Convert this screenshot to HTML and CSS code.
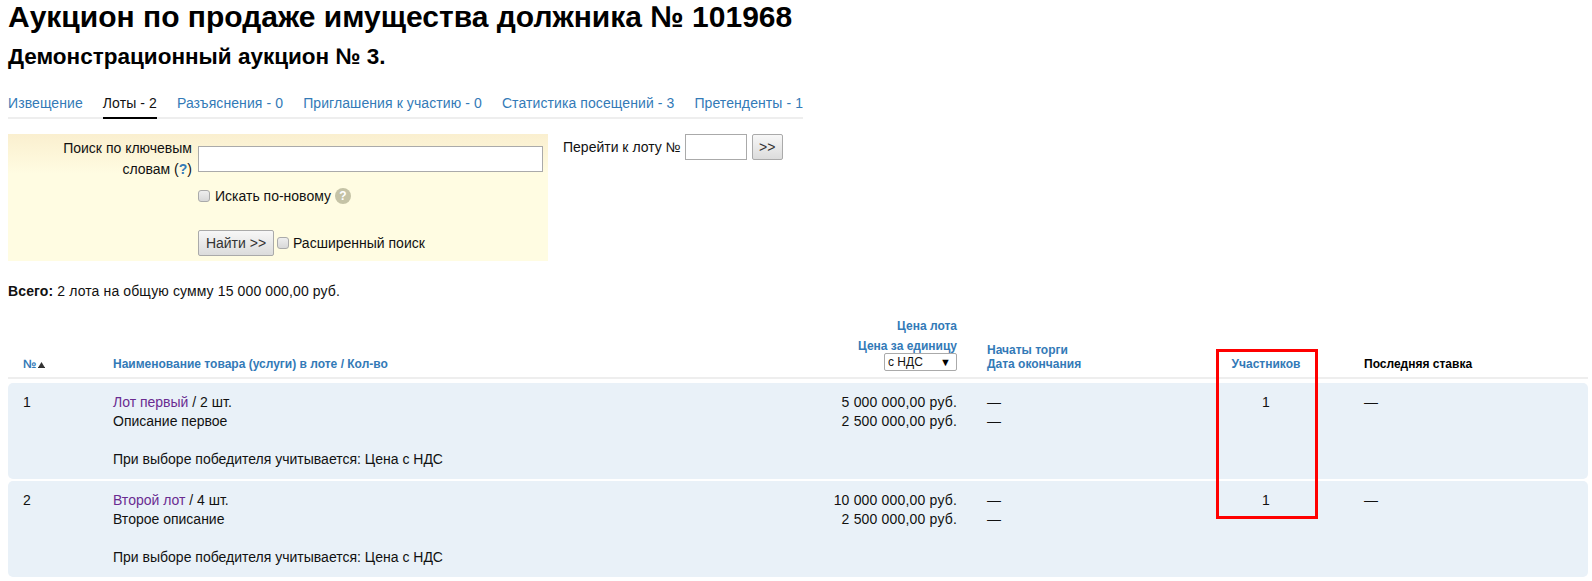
FILE: index.html
```html
<!DOCTYPE html>
<html lang="ru">
<head>
    <meta charset="UTF-8">
    <title>Аукцион № 101968</title>
    <link rel="stylesheet" href="styles.css">
</head>
<body>
<h1>Аукцион по продаже имущества должника № 101968</h1>
<h2>Демонстрационный аукцион № 3.</h2>

<ul class="tabs">
    <li><a href="#">Извещение</a></li>
    <li class="active"><a href="#">Лоты - 2</a></li>
    <li><a href="#">Разъяснения - 0</a></li>
    <li><a href="#">Приглашения к участию - 0</a></li>
    <li><a href="#">Статистика посещений - 3</a></li>
    <li><a href="#">Претенденты - 1</a></li>
</ul>

<div class="filters">
    <form class="search-box">
        <label class="search-label" for="keywords">Поиск по ключевым<br>словам (<a href="#" class="hint">?</a>)</label>
        <div class="search-fields">
            <input id="keywords" class="search-input" type="text">
            <label class="check new-search"><input type="checkbox"> Искать по-новому <span class="help">?</span></label>
            <div class="search-actions">
                <button type="button" class="btn">Найти &gt;&gt;</button>
                <label class="check"><input type="checkbox"> Расширенный поиск</label>
            </div>
        </div>
    </form>
    <div class="goto">
        <label for="lot-number">Перейти к лоту №</label>
        <input id="lot-number" class="goto-input" type="text">
        <button type="button" class="btn btn-small">&gt;&gt;</button>
    </div>
</div>

<p class="total"><b>Всего:</b> 2 лота на общую сумму 15 000 000,00 руб.</p>

<div class="lots">
    <div class="row head">
        <div>
            <a href="#">№</a>
            <svg class="sort" width="7" height="6" viewBox="0 0 7 6"><path d="M3.5 0L6.5 5H0.5Z" fill="#333"/><path d="M0 5.5H7" stroke="#333"/></svg>
        </div>
        <div><a href="#">Наименование товара (услуги) в лоте / Кол-во</a></div>
        <div class="price">
            <a href="#" class="price-lot">Цена лота</a>
            <a href="#">Цена за единицу</a>
            <div class="select-wrap">
                <select><option>с НДС</option><option>без НДС</option></select>
                <span class="select-arrow">▼</span>
            </div>
        </div>
        <div class="date"><a href="#">Начаты торги</a><br><a href="#">Дата окончания</a></div>
        <div class="center"><a href="#">Участников</a></div>
        <div class="last">Последняя ставка</div>
    </div>

    <div class="row lot">
        <div>1</div>
        <div>
            <a href="#" class="visited">Лот первый</a> / 2 шт.<br>
            Описание первое<br><br>
            При выборе победителя учитывается: Цена с НДС
        </div>
        <div class="price">5 000 000,00 руб.<br>2 500 000,00 руб.</div>
        <div class="date">—<br>—</div>
        <div class="center">1</div>
        <div class="last">—</div>
    </div>

    <div class="row lot">
        <div>2</div>
        <div>
            <a href="#" class="visited">Второй лот</a> / 4 шт.<br>
            Второе описание<br><br>
            При выборе победителя учитывается: Цена с НДС
        </div>
        <div class="price">10 000 000,00 руб.<br>2 500 000,00 руб.</div>
        <div class="date">—<br>—</div>
        <div class="center">1</div>
        <div class="last">—</div>
    </div>

    <div class="highlight"></div>
</div>
</body>
</html>
```

FILE: styles.css
```css
body {
    margin: 0;
    padding: 0 4px 0 8px;
    font-family: "Liberation Sans", Arial, sans-serif;
    font-size: 14px;
    line-height: 19px;
    color: #111;
}
a {
    color: #337ab7;
    text-decoration: none;
}
h1 {
    margin: 0;
    color: #000;
    font-size: 30px;
    line-height: 34px;
}
h2 {
    margin: 11px 0 0;
    color: #000;
    font-size: 22.5px;
    line-height: 24px;
}

.tabs {
    display: flex;
    gap: 20px;
    width: 795px;
    margin: 21px 0 0;
    padding: 0;
    list-style: none;
    border-bottom: 2px solid #eee;
    letter-spacing: .09px;
}
.tabs li {
    margin-bottom: -2px;
    padding: 4px 0 4px;
    border-bottom: 2px solid transparent;
    white-space: nowrap;
}
.tabs .active {
    border-bottom-color: #000;
}
.tabs .active a {
    color: #111;
}

.filters {
    display: flex;
    align-items: flex-start;
    margin-top: 15px;
}
.search-box {
    display: flex;
    width: 540px;
    height: 127px;
    box-sizing: border-box;
    padding: 0 5px 0 0;
    background: linear-gradient(#faefcf, #fffce2 40px);
}
.search-label {
    width: 184px;
    padding-top: 4px;
    line-height: 21px;
    text-align: right;
}
.hint {
    font-weight: bold;
}
.search-fields {
    flex: 1;
    margin-left: 6px;
    padding-top: 12px;
}
.search-input {
    display: block;
    width: 100%;
    height: 26px;
    box-sizing: border-box;
    margin: 0;
    border: 1px solid #aaa;
    background: #fff;
}
.check {
    display: flex;
    align-items: center;
    gap: 3px;
}
.check input {
    width: 12px;
    height: 12px;
    margin: 0 2px 0 0;
    border: 1px solid #aaa;
    border-radius: 3px;
    background: linear-gradient(#eee, #d8d8d8);
    appearance: none;
}
.new-search {
    height: 20px;
    margin-top: 14px;
}
.help {
    width: 16px;
    height: 16px;
    margin-left: 1px;
    border-radius: 50%;
    background: #c5c3a6;
    color: #fff;
    font-size: 12px;
    font-weight: bold;
    line-height: 16px;
    text-align: center;
}
.search-actions {
    display: flex;
    align-items: center;
    gap: 3px;
    margin-top: 24px;
}
.search-actions .check {
    gap: 2px;
}
.btn {
    width: 76px;
    height: 26px;
    padding: 0;
    border: 1px solid #aaa;
    border-radius: 2px;
    background: linear-gradient(#f7f7f7, #dcdcdc);
    color: #333;
    font-family: inherit;
    font-size: 14px;
}
.btn-small {
    width: 31px;
    margin-left: 2px;
}

.goto {
    display: flex;
    align-items: flex-start;
    gap: 3px;
    margin-left: 15px;
}
.goto label {
    margin-top: 4px;
    margin-right: 1px;
}
.goto-input {
    width: 62px;
    height: 26px;
    box-sizing: border-box;
    margin: 0;
    border: 1px solid #aaa;
    background: #fff;
}

.total {
    margin: 21px 0 0;
    letter-spacing: .12px;
}

.lots {
    position: relative;
    margin-top: 18px;
}
.row {
    display: grid;
    grid-template-columns: 90px 574px 270px 260px 98px 1fr;
    padding-left: 15px;
}
.head {
    align-items: end;
    padding-bottom: 6px;
    border-bottom: 2px solid #eee;
    color: #000;
    font-size: 12px;
    font-weight: bold;
    line-height: 14px;
}
.lot {
    height: 96px;
    box-sizing: border-box;
    margin-top: 2px;
    padding-top: 10px;
    border-radius: 5px;
    background: #e9f1f8;
}
.lot .price {
    letter-spacing: .18px;
}
.head + .lot {
    margin-top: 4px;
}
.visited {
    color: #6a2c91;
}
.price {
    text-align: right;
}
.price a {
    display: block;
}
.price-lot {
    margin-bottom: 6px;
}
.select-wrap {
    position: relative;
    width: 73px;
    margin-left: auto;
}
.select-wrap select {
    display: block;
    width: 100%;
    height: 18px;
    padding: 0 0 0 3px;
    border: 1px solid #aaa;
    border-radius: 2px;
    background: #fff;
    color: #111;
    font-family: inherit;
    font-size: 12px;
    appearance: none;
}
.select-arrow {
    position: absolute;
    right: 6px;
    top: 1px;
    font-size: 11px;
    font-weight: normal;
    line-height: 16px;
}
.sort {
    margin-left: -2px;
}
.date {
    padding-left: 30px;
}
.center {
    text-align: center;
}
.last {
    padding-left: 49px;
}

.highlight {
    position: absolute;
    left: 1208px;
    top: 30px;
    width: 96px;
    height: 164px;
    border: 3px solid #f00;
}
```
